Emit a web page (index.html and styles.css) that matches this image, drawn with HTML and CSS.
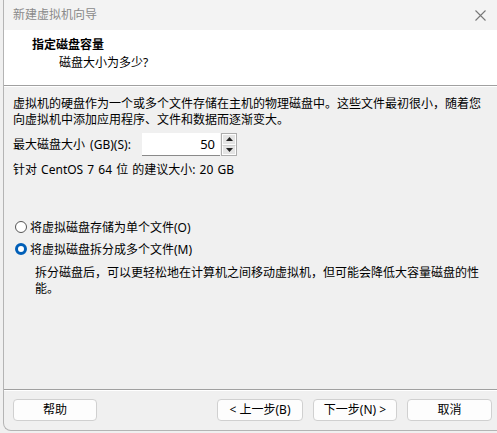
FILE: index.html
```html
<!DOCTYPE html>
<html lang="zh-CN">
<head>
<meta charset="utf-8">
<link rel="stylesheet" href="styles.css">
</head>
<body>
<div class="window">
  <div class="titlebar">
    <span class="title">新建虚拟机向导</span>
    <span class="close-box"><svg class="close" width="11" height="11" viewBox="0 0 11 11"><path d="M0.5 0.5L10.5 10.5M10.5 0.5L0.5 10.5" stroke="#777" stroke-width="1.1" fill="none"/></svg></span>
  </div>
  <div class="header">
    <div class="h-title">指定磁盘容量</div>
    <div class="h-sub">磁盘大小为多少?</div>
  </div>
  <div class="content">
    <p class="para">虚拟机的硬盘作为一个或多个文件存储在主机的物理磁盘中。这些文件最初很小，随着您向虚拟机中添加应用程序、文件和数据而逐渐变大。</p>
    <div class="size-row">
      <span class="label">最大磁盘大小 (GB)(S):</span>
      <div class="input">50</div>
      <div class="spin">
        <div class="spin-btn"><svg width="7" height="4" viewBox="0 0 7 4"><path d="M3.5 0L7 4H0Z" fill="#222"/></svg></div>
        <div class="spin-btn"><svg width="7" height="4" viewBox="0 0 7 4"><path d="M0 0H7L3.5 4Z" fill="#222"/></svg></div>
      </div>
    </div>
    <div class="recommend">针对 CentOS 7 64 位 的建议大小: 20 GB</div>
    <div class="radios">
      <div class="radio-row"><span class="radio"></span><span>将虚拟磁盘存储为单个文件(O)</span></div>
      <div class="radio-row checked"><span class="radio"></span><span>将虚拟磁盘拆分成多个文件(M)</span></div>
      <p class="desc">拆分磁盘后，可以更轻松地在计算机之间移动虚拟机，但可能会降低大容量磁盘的性能。</p>
    </div>
  </div>
  <div class="footer">
    <button class="btn btn-help">帮助</button>
    <div class="nav">
      <button class="btn btn-prev">&lt; 上一步(B)</button>
      <button class="btn btn-next">下一步(N) &gt;</button>
      <button class="btn btn-cancel">取消</button>
    </div>
  </div>
</div>
</body>
</html>
```

FILE: styles.css
```css
html, body {
  margin: 0;
  padding: 0;
  background: #f0f0f0;
  overflow: hidden;
}
body {
  width: 497px;
  height: 433px;
  font-family: "Noto Sans", "Noto Sans CJK SC", sans-serif;
  font-size: 12px;
  color: #000;
}
.window {
  margin-left: 3px;
  width: 494px;
  height: 431px;
  box-sizing: border-box;
  border-left: 1px solid #b4b4b4;
  border-bottom: 1px solid #b4b4b4;
  border-bottom-left-radius: 8px;
  background: #f0f0f0;
  display: flex;
  flex-direction: column;
}
.titlebar {
  height: 30px;
  flex: none;
  background: #f3f3f3;
  display: flex;
  align-items: center;
  padding-left: 9px;
}
.title {
  color: #8a8a8a;
  flex: 1 1 auto;
  line-height: 16px;
}
.close-box {
  flex: none;
  width: 34px;
  height: 30px;
  display: flex;
  align-items: center;
  justify-content: center;
}
.close {
  display: block;
}
.header {
  height: 56px;
  flex: none;
  background: #fff;
  border-bottom: 1px solid #a0a0a0;
  box-shadow: 0 1px 0 #ffffff;
  box-sizing: border-box;
  padding-top: 6px;
}
.h-title {
  font-weight: bold;
  line-height: 18px;
  padding-left: 28px;
}
.h-sub {
  line-height: 18px;
  padding-left: 55px;
}
.content {
  height: 304px;
  flex: none;
  box-sizing: border-box;
  padding: 10px 0 0 9px;
  border-bottom: 1px solid #a0a0a0;
}
.para {
  margin: 0;
  width: 472px;
  line-height: 16px;
}
.size-row {
  display: flex;
  align-items: center;
  margin-top: 5px;
  height: 23px;
}
.label {
  line-height: 16px;
  width: 124px;
  flex: none;
  word-spacing: 2px;
}
.input {
  margin-left: 5px;
  width: 78px;
  height: 23px;
  box-sizing: border-box;
  background: #fff;
  border-bottom: 1px solid #8a8a8a;
  text-align: right;
  padding-right: 5px;
  line-height: 22px;
  font-size: 13px;
}
.spin {
  margin-left: 1px;
  width: 16px;
  height: 23px;
  box-sizing: border-box;
  border: 1px solid #adadad;
  display: flex;
  flex-direction: column;
  background: #e9e9e9;
}
.spin-btn {
  flex: 1;
  display: flex;
  align-items: center;
  justify-content: center;
  border: 1px solid #fdfdfd;
  background: #e4e4e4;
}
.spin-btn + .spin-btn {
  border-top-color: #d0d0d0;
}
.recommend {
  margin-top: 6px;
  line-height: 16px;
  word-spacing: 1px;
}
.radios {
  margin-top: 41px;
}
.radio-row {
  display: flex;
  align-items: center;
  height: 16px;
  margin-left: 2px;
}
.radio-row + .radio-row {
  margin-top: 6px;
}
.radio {
  width: 12px;
  height: 12px;
  box-sizing: border-box;
  border-radius: 50%;
  border: 1px solid #555;
  background: #fff;
  margin-right: 3px;
  flex: none;
}
.checked .radio {
  border: 3.5px solid #005fb8;
  background: #fff;
}
.desc {
  margin: 8px 0 0 22px;
  width: 460px;
  line-height: 16px;
}
.footer {
  flex: 1;
  display: flex;
  align-items: flex-start;
  padding: 9px 5px 0 9px;
  box-shadow: inset 0 1px 0 #ffffff;
}
.btn {
  flex: none;
  height: 22px;
  box-sizing: border-box;
  border: 1px solid #d0d0d0;
  border-radius: 4px;
  background: #fdfdfd;
  font-family: inherit;
  font-size: 12px;
  color: #000;
  padding: 0;
  line-height: 20px;
}
.btn-help {
  width: 84px;
}
.nav {
  margin-left: auto;
  display: flex;
  gap: 10px;
}
.btn-prev {
  width: 86px;
}
.btn-next {
  width: 84px;
}
.btn-cancel {
  width: 85px;
}
```
